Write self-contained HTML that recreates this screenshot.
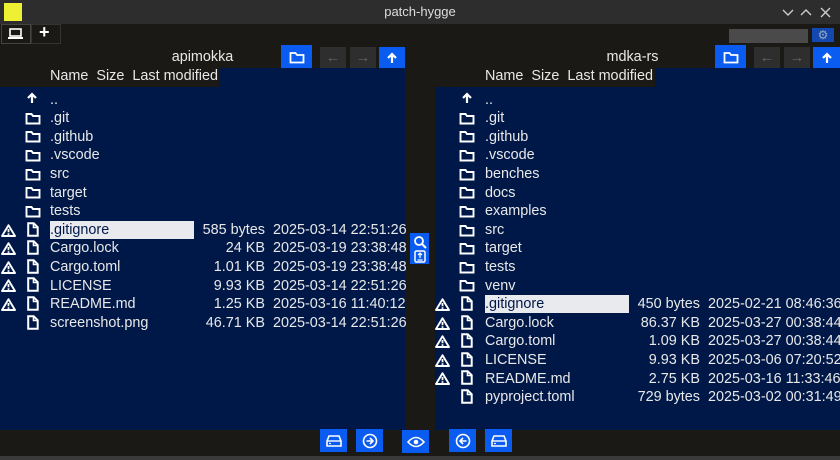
<!DOCTYPE html><html><head><style>
*{margin:0;padding:0;box-sizing:border-box}
body{width:840px;height:460px;background:#1b1915;font-family:"Liberation Sans","DejaVu Sans",sans-serif;color:#e8e8e8;position:relative;overflow:hidden;font-size:14.4px}
.a{position:absolute}
.btn{position:absolute;background:#0a5cf0;display:flex;align-items:center;justify-content:center}
.gb{position:absolute;background:#2e2e2e;display:flex;align-items:center;justify-content:center}
.panel{position:absolute;background:#001848}
.r{position:absolute;height:18px;line-height:18px;white-space:nowrap}
svg{display:block}
</style></head><body>
<div class="a" style="left:0;top:0;width:840px;height:24px;background:#2d2d2d"></div>
<div class="a" style="left:4px;top:3px;width:18px;height:18px;background:#eef033"></div>
<div class="a" style="left:0;top:4px;width:840px;text-align:center;font-size:13px;color:#ddd">patch-hygge</div>
<svg class="a" style="left:782px;top:7px" width="54" height="12"><g stroke="#ccc" stroke-width="1.4" fill="none"><path d="M1 3l5 5 5-5"/><path d="M19 8l5-5 5 5"/><path d="M39 1l9 9M48 1l-9 9"/></g></svg>
<div class="a" style="left:1px;top:24px;width:30px;height:20px;border:1px solid #444;background:#1b1915"></div>
<svg class="a" style="left:8px;top:28px" width="16" height="12"><rect x="2" y="1" width="11" height="7" fill="none" stroke="#fff" stroke-width="1.6"/><rect x="0" y="9" width="15" height="2" fill="#fff"/></svg>
<div class="a" style="left:31px;top:24px;width:30px;height:20px;border:1px solid #333"></div>
<div class="a" style="left:39px;top:22px;font-size:18px;font-weight:bold;color:#fff">+</div>
<div class="a" style="left:729px;top:29px;width:79px;height:14px;background:#4a4a4a"></div>
<div class="a" style="left:812px;top:28px;width:22px;height:14px;background:#1348b0;color:#9ab;font-size:12px;text-align:center;line-height:14px">⚙</div>

<div class="a" style="left:0;top:49px;width:405px;text-align:center">apimokka</div>
<div class="btn" style="left:281px;top:45px;width:31px;height:24px"><svg width="16" height="13"><path d="M1.5 2h5l1.5 2h6.5v7.5h-13z" fill="none" stroke="#fff" stroke-width="1.8"/></svg></div>
<div class="gb" style="left:320px;top:47px;width:26px;height:21px;color:#666;font-weight:bold">←</div>
<div class="gb" style="left:350px;top:47px;width:26px;height:21px;color:#666;font-weight:bold">→</div>
<div class="btn" style="left:379px;top:47px;width:26px;height:21px"><svg width="12" height="12"><path d="M6 11V2M2 6l4-4 4 4" fill="none" stroke="#fff" stroke-width="2.2"/></svg></div>
<div class="panel" style="left:220px;top:68px;width:185px;height:20px"></div>
<div class="panel" style="left:0;top:87px;width:405px;height:343px"></div>
<div class="a" style="left:50px;top:68px">Name&nbsp; Size&nbsp; Last modified</div>

<div class="a" style="left:435px;top:49px;width:395px;text-align:center">mdka-rs</div>
<div class="btn" style="left:715px;top:45px;width:31px;height:24px"><svg width="16" height="13"><path d="M1.5 2h5l1.5 2h6.5v7.5h-13z" fill="none" stroke="#fff" stroke-width="1.8"/></svg></div>
<div class="gb" style="left:754px;top:47px;width:26px;height:21px;color:#666;font-weight:bold">←</div>
<div class="gb" style="left:784px;top:47px;width:26px;height:21px;color:#666;font-weight:bold">→</div>
<div class="btn" style="left:813px;top:47px;width:27px;height:21px"><svg width="12" height="12"><path d="M6 11V2M2 6l4-4 4 4" fill="none" stroke="#fff" stroke-width="2.2"/></svg></div>
<div class="panel" style="left:655px;top:68px;width:185px;height:20px"></div>
<div class="panel" style="left:435px;top:87px;width:405px;height:343px"></div>
<div class="a" style="left:485px;top:68px">Name&nbsp; Size&nbsp; Last modified</div>

<svg width="0" height="0" style="position:absolute"><defs>
<symbol id="fo" viewBox="0 0 16 13"><path d="M1.5 2h5l1.5 2h6.5v7.5h-13z" fill="none" stroke="#fff" stroke-width="1.9"/></symbol>
<symbol id="fi" viewBox="0 0 12 15"><path d="M1.2 1.2h5.5l4 4v8.6H1.2z" fill="none" stroke="#fff" stroke-width="2"/><path d="M6.5 1.5v4h4" fill="none" stroke="#fff" stroke-width="1.6"/></symbol>
<symbol id="wa" viewBox="0 0 15 13"><path d="M7.5 1.2L14 12H1z" fill="none" stroke="#fff" stroke-width="1.9" stroke-linejoin="round"/><path d="M7.5 5v3.3M7.5 9.3v1.6" stroke="#fff" stroke-width="1.8"/></symbol>
<symbol id="up" viewBox="0 0 12 12"><path d="M6 11V2M2 6l4-4 4 4" fill="none" stroke="#fff" stroke-width="2.2"/></symbol>
</defs></svg>

<svg class="a" style="left:26px;top:92px" width="12" height="12"><use href="#up"/></svg><div class="r" style="left:50px;top:91px">..</div>
<svg class="a" style="left:25px;top:112px" width="16" height="13"><use href="#fo"/></svg><div class="r" style="left:50px;top:109px">.git</div>
<svg class="a" style="left:25px;top:130px" width="16" height="13"><use href="#fo"/></svg><div class="r" style="left:50px;top:128px">.github</div>
<svg class="a" style="left:25px;top:149px" width="16" height="13"><use href="#fo"/></svg><div class="r" style="left:50px;top:146px">.vscode</div>
<svg class="a" style="left:25px;top:168px" width="16" height="13"><use href="#fo"/></svg><div class="r" style="left:50px;top:165px">src</div>
<svg class="a" style="left:25px;top:186px" width="16" height="13"><use href="#fo"/></svg><div class="r" style="left:50px;top:184px">target</div>
<svg class="a" style="left:25px;top:205px" width="16" height="13"><use href="#fo"/></svg><div class="r" style="left:50px;top:202px">tests</div>

<div class="a" style="left:50px;top:221px;width:144px;height:18px;background:#e8eaee"></div>
<svg class="a" style="left:1px;top:224px" width="15" height="13"><use href="#wa"/></svg><svg class="a" style="left:27px;top:222px" width="12" height="15"><use href="#fi"/></svg><div class="r" style="left:50px;top:221px;color:#001848">.gitignore</div><div class="r" style="left:165px;top:221px;width:100px;text-align:right">585 bytes</div><div class="r" style="left:273px;top:221px">2025-03-14 22:51:26</div>
<svg class="a" style="left:1px;top:242px" width="15" height="13"><use href="#wa"/></svg><svg class="a" style="left:27px;top:240px" width="12" height="15"><use href="#fi"/></svg><div class="r" style="left:50px;top:239px">Cargo.lock</div><div class="r" style="left:165px;top:239px;width:100px;text-align:right">24 KB</div><div class="r" style="left:273px;top:239px">2025-03-19 23:38:48</div>
<svg class="a" style="left:1px;top:261px" width="15" height="13"><use href="#wa"/></svg><svg class="a" style="left:27px;top:259px" width="12" height="15"><use href="#fi"/></svg><div class="r" style="left:50px;top:258px">Cargo.toml</div><div class="r" style="left:165px;top:258px;width:100px;text-align:right">1.01 KB</div><div class="r" style="left:273px;top:258px">2025-03-19 23:38:48</div>
<svg class="a" style="left:1px;top:279px" width="15" height="13"><use href="#wa"/></svg><svg class="a" style="left:27px;top:277px" width="12" height="15"><use href="#fi"/></svg><div class="r" style="left:50px;top:277px">LICENSE</div><div class="r" style="left:165px;top:277px;width:100px;text-align:right">9.93 KB</div><div class="r" style="left:273px;top:277px">2025-03-14 22:51:26</div>
<svg class="a" style="left:1px;top:298px" width="15" height="13"><use href="#wa"/></svg><svg class="a" style="left:27px;top:296px" width="12" height="15"><use href="#fi"/></svg><div class="r" style="left:50px;top:295px">README.md</div><div class="r" style="left:165px;top:295px;width:100px;text-align:right">1.25 KB</div><div class="r" style="left:273px;top:295px">2025-03-16 11:40:12</div>
<svg class="a" style="left:27px;top:315px" width="12" height="15"><use href="#fi"/></svg><div class="r" style="left:50px;top:314px">screenshot.png</div><div class="r" style="left:165px;top:314px;width:100px;text-align:right">46.71 KB</div><div class="r" style="left:273px;top:314px">2025-03-14 22:51:26</div>

<div class="btn" style="left:410px;top:233px;width:19px;height:31px;flex-direction:column">
<svg width="14" height="28"><circle cx="6" cy="6" r="4" fill="none" stroke="#fff" stroke-width="1.8"/><path d="M9 9l4 4" stroke="#fff" stroke-width="2"/><rect x="2" y="16" width="10" height="11" rx="1.5" fill="none" stroke="#fff" stroke-width="1.5"/><path d="M7 18v5M5 20l2-2 2 2M4.5 25h5" stroke="#fff" stroke-width="1.3" fill="none"/></svg></div>

<svg class="a" style="left:461px;top:92px" width="12" height="12"><use href="#up"/></svg><div class="r" style="left:485px;top:91px">..</div>
<svg class="a" style="left:459px;top:112px" width="16" height="13"><use href="#fo"/></svg><div class="r" style="left:485px;top:109px">.git</div>
<svg class="a" style="left:459px;top:130px" width="16" height="13"><use href="#fo"/></svg><div class="r" style="left:485px;top:128px">.github</div>
<svg class="a" style="left:459px;top:149px" width="16" height="13"><use href="#fo"/></svg><div class="r" style="left:485px;top:146px">.vscode</div>
<svg class="a" style="left:459px;top:168px" width="16" height="13"><use href="#fo"/></svg><div class="r" style="left:485px;top:165px">benches</div>
<svg class="a" style="left:459px;top:186px" width="16" height="13"><use href="#fo"/></svg><div class="r" style="left:485px;top:184px">docs</div>
<svg class="a" style="left:459px;top:205px" width="16" height="13"><use href="#fo"/></svg><div class="r" style="left:485px;top:202px">examples</div>
<svg class="a" style="left:459px;top:224px" width="16" height="13"><use href="#fo"/></svg><div class="r" style="left:485px;top:221px">src</div>
<svg class="a" style="left:459px;top:242px" width="16" height="13"><use href="#fo"/></svg><div class="r" style="left:485px;top:239px">target</div>
<svg class="a" style="left:459px;top:261px" width="16" height="13"><use href="#fo"/></svg><div class="r" style="left:485px;top:258px">tests</div>
<svg class="a" style="left:459px;top:279px" width="16" height="13"><use href="#fo"/></svg><div class="r" style="left:485px;top:277px">venv</div>

<div class="a" style="left:485px;top:295px;width:144px;height:18px;background:#e8eaee"></div>
<svg class="a" style="left:435px;top:298px" width="15" height="13"><use href="#wa"/></svg><svg class="a" style="left:461px;top:296px" width="12" height="15"><use href="#fi"/></svg><div class="r" style="left:485px;top:295px;color:#001848">.gitignore</div><div class="r" style="left:600px;top:295px;width:100px;text-align:right">450 bytes</div><div class="r" style="left:708px;top:295px">2025-02-21 08:46:36</div>
<svg class="a" style="left:435px;top:317px" width="15" height="13"><use href="#wa"/></svg><svg class="a" style="left:461px;top:315px" width="12" height="15"><use href="#fi"/></svg><div class="r" style="left:485px;top:314px">Cargo.lock</div><div class="r" style="left:600px;top:314px;width:100px;text-align:right">86.37 KB</div><div class="r" style="left:708px;top:314px">2025-03-27 00:38:44</div>
<svg class="a" style="left:435px;top:335px" width="15" height="13"><use href="#wa"/></svg><svg class="a" style="left:461px;top:333px" width="12" height="15"><use href="#fi"/></svg><div class="r" style="left:485px;top:332px">Cargo.toml</div><div class="r" style="left:600px;top:332px;width:100px;text-align:right">1.09 KB</div><div class="r" style="left:708px;top:332px">2025-03-27 00:38:44</div>
<svg class="a" style="left:435px;top:354px" width="15" height="13"><use href="#wa"/></svg><svg class="a" style="left:461px;top:352px" width="12" height="15"><use href="#fi"/></svg><div class="r" style="left:485px;top:351px">LICENSE</div><div class="r" style="left:600px;top:351px;width:100px;text-align:right">9.93 KB</div><div class="r" style="left:708px;top:351px">2025-03-06 07:20:52</div>
<svg class="a" style="left:435px;top:372px" width="15" height="13"><use href="#wa"/></svg><svg class="a" style="left:461px;top:370px" width="12" height="15"><use href="#fi"/></svg><div class="r" style="left:485px;top:370px">README.md</div><div class="r" style="left:600px;top:370px;width:100px;text-align:right">2.75 KB</div><div class="r" style="left:708px;top:370px">2025-03-16 11:33:46</div>
<svg class="a" style="left:461px;top:389px" width="12" height="15"><use href="#fi"/></svg><div class="r" style="left:485px;top:388px">pyproject.toml</div><div class="r" style="left:600px;top:388px;width:100px;text-align:right">729 bytes</div><div class="r" style="left:708px;top:388px">2025-03-02 00:31:49</div>

<div class="btn" style="left:320px;top:429px;width:27px;height:23px"><svg width="16" height="12"><path d="M3 1h10l2 5v5H1V6z" fill="none" stroke="#fff" stroke-width="1.6"/><path d="M1 6h14" stroke="#fff" stroke-width="1.4"/><path d="M3 8.5h2" stroke="#fff" stroke-width="1.2"/></svg></div>
<div class="btn" style="left:356px;top:429px;width:27px;height:23px"><svg width="16" height="16"><circle cx="8" cy="8" r="6.5" fill="none" stroke="#fff" stroke-width="1.6"/><path d="M4.5 8h6M8 5l3 3-3 3" fill="none" stroke="#fff" stroke-width="1.6"/></svg></div>
<div class="btn" style="left:402px;top:430px;width:27px;height:23px"><svg width="18" height="12"><path d="M1 6q8-9 16 0q-8 9-16 0z" fill="none" stroke="#fff" stroke-width="1.6"/><circle cx="9" cy="6" r="2.3" fill="#fff"/></svg></div>
<div class="btn" style="left:449px;top:429px;width:27px;height:23px"><svg width="16" height="16"><circle cx="8" cy="8" r="6.5" fill="none" stroke="#fff" stroke-width="1.6"/><path d="M11.5 8h-6M8 5l-3 3 3 3" fill="none" stroke="#fff" stroke-width="1.6"/></svg></div>
<div class="btn" style="left:485px;top:429px;width:27px;height:23px"><svg width="16" height="12"><path d="M3 1h10l2 5v5H1V6z" fill="none" stroke="#fff" stroke-width="1.6"/><path d="M1 6h14" stroke="#fff" stroke-width="1.4"/><path d="M3 8.5h2" stroke="#fff" stroke-width="1.2"/></svg></div>
<div class="a" style="left:0;top:456px;width:840px;height:4px;background:#3a3a3a"></div>
</body></html>
